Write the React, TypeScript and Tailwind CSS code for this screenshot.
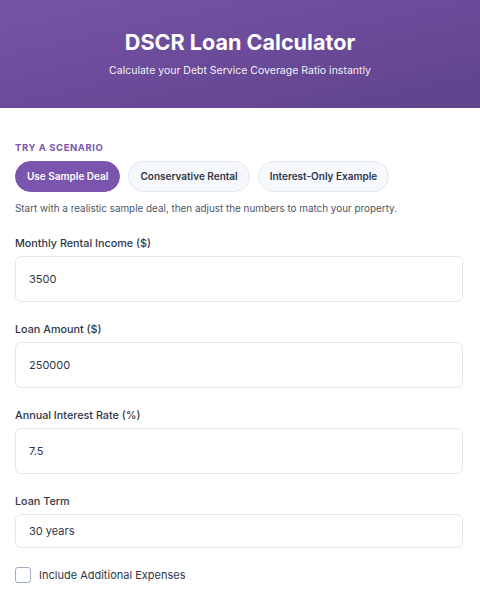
import React, { useState } from 'react';

const scenarios = ['Use Sample Deal', 'Conservative Rental', 'Interest-Only Example'];

const Field: React.FC<{ label: string; value: string; tall?: boolean }> = ({ label, value, tall = true }) => (
  <div className="flex flex-col">
    <label className="text-[10.8px] font-medium text-[#2d3748] leading-[14px] mb-[5px]">{label}</label>
    <div
      className={`border border-[#e2e8f0] rounded-[6px] bg-white px-[13px] flex items-center text-[11px] text-[#2d3748] ${
        tall ? 'h-[46px]' : 'h-[34px]'
      }`}
    >
      {value}
    </div>
  </div>
);

const App: React.FC = () => {
  const [active, setActive] = useState(0);
  const [expenses, setExpenses] = useState(false);

  return (
    <div className="w-[480px] h-[600px] overflow-hidden bg-white font-['Inter',sans-serif]">
      <header className="h-[108px] bg-gradient-to-br from-[#7753a8] to-[#5f438b] flex flex-col items-center justify-center text-white">
        <h1 className="text-[21.6px] font-bold leading-[28px] mt-[-3px]">DSCR Loan Calculator</h1>
        <p className="text-[10.5px] leading-[14px] mt-[8px] text-white/95">Calculate your Debt Service Coverage Ratio instantly</p>
      </header>

      <main className="pl-[15px] pr-[17px] pt-[34px]">
        <div className="text-[9.5px] font-bold tracking-[0.06em] text-[#7b55ad] uppercase leading-[12px]">Try a Scenario</div>
        <div className="flex gap-[8px] mt-[7px]">
          {scenarios.map((s, i) => (
            <button
              key={s}
              onClick={() => setActive(i)}
              className={`h-[31px] px-[11px] rounded-full text-[10px] font-semibold border ${
                active === i
                  ? 'bg-[#7b55ad] border-[#7b55ad] text-white'
                  : 'bg-[#f7f8fc] border-[#e2e8f0] text-[#2d3748]'
              }`}
            >
              {s}
            </button>
          ))}
        </div>
        <p className="text-[9.9px] text-[#4a5568] mt-[10px] leading-[13px]">
          Start with a realistic sample deal, then adjust the numbers to match your property.
        </p>

        <div className="flex flex-col gap-[21px] mt-[22px]">
          <Field label="Monthly Rental Income ($)" value="3500" />
          <Field label="Loan Amount ($)" value="250000" />
          <Field label="Annual Interest Rate (%)" value="7.5" />
          <Field label="Loan Term" value="30 years" tall={false} />
        </div>

        <label className="flex items-center gap-[8px] mt-[19px] cursor-pointer">
          <input
            type="checkbox"
            checked={expenses}
            onChange={e => setExpenses(e.target.checked)}
            className="appearance-none w-[16px] h-[16px] border border-[#a0aec0] rounded-[3px] bg-white checked:bg-[#7b55ad]"
          />
          <span className="text-[11px] text-[#2d3748]">Include Additional Expenses</span>
        </label>
      </main>
    </div>
  );
};

export default App;
